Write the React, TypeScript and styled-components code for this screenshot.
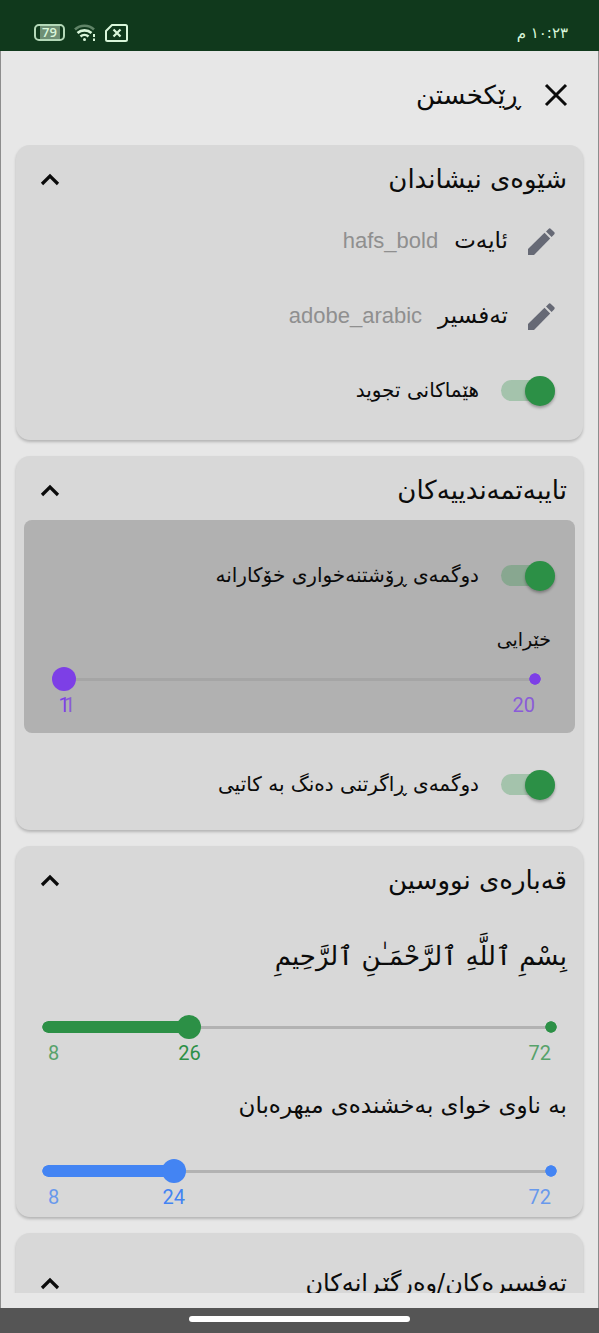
import React, { useState } from "react";
import styled, { createGlobalStyle } from "styled-components";

const GlobalStyle = createGlobalStyle`
  *, *::before, *::after { box-sizing: border-box; }
  body {
    margin: 0;
    background: #e7e7e7;
    color: #0b0b0b;
    font-family: "DejaVu Sans", sans-serif;
  }
  button { font: inherit; color: inherit; background: none; border: 0; padding: 0; cursor: pointer; }
  h1, h2, p { margin: 0; font-weight: 400; }
`;

const Screen = styled.div`
  display: flex;
  flex-direction: column;
  height: 100vh;
`;

const StatusBar = styled.header`
  flex: none;
  display: flex;
  justify-content: space-between;
  align-items: center;
  height: 51px;
  padding: 14px 31px 0 34px;
  background: #10391c;
  color: #d9f6da;
`;

const StatusIcons = styled.div`
  display: flex;
  align-items: center;
  gap: 9px;
  direction: ltr;
`;

const Clock = styled.time`
  font-size: 15px;
  line-height: 24px;
`;

const Battery = styled.span`
  display: flex;
  align-items: center;
  justify-content: center;
  width: 31px;
  height: 17px;
  border: 2px solid #b4d8b8;
  border-radius: 5px;
  background: linear-gradient(90deg, #10391c 4px, #6f8f75 4px, #6f8f75 24px, #10391c 24px);
  font: 600 13px/13px "Open Sans", sans-serif;
`;

const Page = styled.main`
  flex: 1;
  min-height: 0;
  display: flex;
  flex-direction: column;
  padding-bottom: 15px;
  border: solid #8d8d8d;
  border-width: 0 1px;
`;

const TitleBar = styled.div`
  flex: none;
  display: flex;
  align-items: center;
  gap: 23px;
  height: 94px;
  padding: 0 30px 6px;
`;

const Title = styled.h1`
  font-size: 26px;
  line-height: 40px;
`;

const IconButton = styled.button`
  display: flex;
`;

const Scroller = styled.div`
  flex: 1;
  min-height: 0;
  overflow-y: auto;
  scrollbar-width: none;
  display: flex;
  flex-direction: column;
  gap: 16px;
  padding: 0 15px;
`;

const Card = styled.section<{ $bottom: number }>`
  flex: none;
  padding-bottom: ${(p) => p.$bottom}px;
  border-radius: 14px;
  background: #d8d8d8;
  box-shadow: 0 2px 3px rgba(0, 0, 0, 0.22);
`;

const CardHeader = styled.button<{ $tall?: boolean }>`
  display: flex;
  align-items: center;
  justify-content: space-between;
  width: 100%;
  height: ${(p) => (p.$tall ? 74 : 58)}px;
  padding: ${(p) => (p.$tall ? 26 : 10)}px 16px 0 24px;
  font-size: ${(p) => (p.$tall ? 24 : 26)}px;
  line-height: 40px;
`;

const Rows = styled.div`
  display: flex;
  flex-direction: column;
  gap: 17px;
  padding-top: 9px;
`;

const Row = styled.div`
  display: flex;
  align-items: center;
  gap: 16px;
  min-height: 58px;
  padding: 0 28px;
`;

const SwitchRow = styled.label<{ $inset?: boolean }>`
  display: flex;
  align-items: center;
  gap: 22px;
  min-height: 58px;
  padding: 0 ${(p) => (p.$inset ? 20 : 28)}px;
  font-size: 20px;
  line-height: 32px;
`;

const SwitchText = styled.span`
  padding-bottom: 2px;
`;

const RowName = styled.span`
  padding: 0 4px 2px 0;
  font-size: 23px;
  line-height: 32px;
`;

const FontName = styled.span`
  direction: ltr;
  padding-bottom: 1px;
  color: #8f8f8f;
  font: 22px/32px "Liberation Sans", sans-serif;
`;

const Switch = styled.input`
  appearance: none;
  flex: none;
  position: relative;
  width: 54px;
  height: 30px;
  margin: 0;

  &::before {
    content: "";
    position: absolute;
    inset: 4px 0 5px;
    border-radius: 11px;
    background: rgba(90, 90, 90, 0.32);
  }
  &::after {
    content: "";
    position: absolute;
    top: 0;
    left: 0;
    width: 30px;
    height: 30px;
    border-radius: 50%;
    background: #f1f1f1;
    box-shadow: 0 2px 3px rgba(0, 0, 0, 0.3);
  }
  &:checked::before { background: rgba(44, 145, 70, 0.3); }
  &:checked::after { left: auto; right: 0; background: #2c9046; }
`;

const Panel = styled.div`
  margin: 6px 8px 23px;
  padding: 27px 0 16px;
  border-radius: 8px;
  background: #b1b1b1;
`;

const SliderName = styled.p`
  margin-top: 18px;
  padding: 0 24px 11px;
  font-size: 19px;
  line-height: 32px;
`;

const Basmala = styled.p`
  height: 110px;
  padding: 22px 16px 0;
  font-size: 26px;
  line-height: 60px;
  white-space: nowrap;
`;

const Sample = styled.p`
  height: 93px;
  padding: 20px 16px 0;
  font-size: 23px;
  line-height: 40px;
  white-space: nowrap;
`;

const SliderBox = styled.div<{ $side: number; $color: string }>`
  margin: 0 ${(p) => p.$side}px;
  direction: ltr;
  color: ${(p) => p.$color};
`;

const Range = styled.input<{ $line: string; $cap: boolean }>`
  appearance: none;
  display: block;
  width: 100%;
  height: 26px;
  margin: 0;
  background:
    radial-gradient(closest-side, currentColor 90%, transparent) right 6px center / 12px 12px no-repeat,
    radial-gradient(closest-side, currentColor 90%, transparent) left 6px center / 12px 12px no-repeat,
    linear-gradient(currentColor, currentColor) 12px 50% / calc((100% - 24px) * var(--at)) 12px no-repeat,
    linear-gradient(${(p) => p.$line}, ${(p) => p.$line}) center / calc(100% - 24px) 3px no-repeat;
  color: inherit;

  &::-webkit-slider-thumb {
    appearance: none;
    width: 24px;
    height: 24px;
    border-radius: 50%;
    background: currentColor;
  }
`;

const Scale = styled.div`
  position: relative;
  display: flex;
  justify-content: space-between;
  margin: 1px 12px 0;
  font: 20px/24px Roboto, sans-serif;
`;

const Bound = styled.span`
  opacity: 0.75;
`;

const Current = styled.output`
  position: absolute;
  top: 0;
  transform: translateX(-50%);
`;

const NavBar = styled.footer`
  flex: none;
  display: flex;
  justify-content: center;
  align-items: flex-start;
  height: 25px;
  padding-top: 8px;
  background: #555;
`;

const HomePill = styled.span`
  width: 37%;
  height: 6px;
  border-radius: 3px;
  background: #fff;
`;

function Chevron() {
  return (
    <svg width="20" height="14" viewBox="0 0 20 14" fill="none" stroke="#0b0b0b" strokeWidth="3.2">
      <path d="M2 12l8-8 8 8" />
    </svg>
  );
}

function Pencil() {
  return (
    <svg width="27" height="27" viewBox="0 0 27 27" fill="#666975">
      <path d="M0 21L16.500 4.800l5.700 5.700L6 27H0z" />
      <path d="M18 3.400l2.500-2.500q1.200-1.200 2.400 0l3.200 3.200q1.200 1.200 0 2.400L23.600 9z" />
    </svg>
  );
}

function Wifi() {
  return (
    <svg width="22" height="18" viewBox="0 0 22 18" fill="none" stroke="#d9f6da" strokeWidth="2.6">
      <path d="M1 5.500a14 14 0 0 1 19 0" opacity=".4" />
      <path d="M3.500 9a10.500 10.500 0 0 1 14 0M6.500 12.500a6 6 0 0 1 8 0" />
      <circle cx="10.500" cy="15.500" r="1.500" fill="#d9f6da" stroke="none" />
      <path d="M20 10v3M20 14.500v2.500" strokeWidth="2" />
    </svg>
  );
}

function NoSim() {
  return (
    <svg width="23" height="18" viewBox="0 0 23 18" fill="none" stroke="#d9f6da" strokeWidth="2">
      <path d="M7 1h13.500a1.500 1.500 0 0 1 1.500 1.500v13a1.500 1.500 0 0 1-1.500 1.500h-18a1.500 1.500 0 0 1-1.500-1.500V7z" strokeLinejoin="round" />
      <path d="M8.500 5.500l7 7M15.500 5.500l-7 7" strokeWidth="2.200" />
    </svg>
  );
}

type SliderProps = { name: string; min: number; max: number; start: number; color: string; side: number; line?: string };

function Slider({ name, min, max, start, color, side, line = "#b2b2b2" }: SliderProps) {
  const [value, setValue] = useState(start);
  const at = (value - min) / (max - min);
  return (
    <SliderBox $side={side} $color={color}>
      <Range
        type="range"
        aria-label={name}
        min={min}
        max={max}
        value={value}
        $line={line}
        $cap={at > 0}
        onChange={(e) => setValue(Number(e.target.value))}
        style={{ "--at": at } as React.CSSProperties}
      />
      <Scale>
        <Bound>{min}</Bound>
        <Current style={{ left: `${at * 100}%` }}>{value}</Current>
        <Bound>{max}</Bound>
      </Scale>
    </SliderBox>
  );
}

function Toggle({ text, inset }: { text: string; inset?: boolean }) {
  return (
    <SwitchRow $inset={inset}>
      <Switch type="checkbox" role="switch" defaultChecked />
      <SwitchText>{text}</SwitchText>
    </SwitchRow>
  );
}

function Header({ text, tall }: { text: string; tall?: boolean }) {
  return (
    <h2>
      <CardHeader type="button" aria-expanded $tall={tall}>
        <span>{text}</span>
        <Chevron />
      </CardHeader>
    </h2>
  );
}

function FontRow({ name, font }: { name: string; font: string }) {
  return (
    <Row>
      <IconButton type="button" aria-label={name}>
        <Pencil />
      </IconButton>
      <RowName>{name}</RowName>
      <FontName>{font}</FontName>
    </Row>
  );
}

export default function App() {
  return (
    <Screen dir="rtl" lang="ckb">
      <GlobalStyle />
      <StatusBar>
        <Clock>١٠:٢٣ م</Clock>
        <StatusIcons>
          <Battery>79</Battery>
          <Wifi />
          <NoSim />
        </StatusIcons>
      </StatusBar>
      <Page>
        <TitleBar>
          <IconButton type="button" aria-label="داخستن">
            <svg width="24" height="24" viewBox="0 0 24 24" stroke="#0b0b0b" strokeWidth="3">
              <path d="M2 2l20 20M22 2L2 22" />
            </svg>
          </IconButton>
          <Title>ڕێکخستن</Title>
        </TitleBar>
        <Scroller>
          <Card $bottom={20}>
            <Header text="شێوەی نیشاندان" />
            <Rows>
              <FontRow name="ئایەت" font="hafs_bold" />
              <FontRow name="تەفسیر" font="adobe_arabic" />
              <Toggle text="هێماکانی تجوید" />
            </Rows>
          </Card>
          <Card $bottom={16}>
            <Header text="تایبەتمەندییەکان" />
            <Panel>
              <Toggle text="دوگمەی ڕۆشتنەخواری خۆکارانە" inset />
              <SliderName>خێرایی</SliderName>
              <Slider name="خێرایی" min={1} max={20} start={1} color="#7d3fe6" side={28} line="#a5a5a5" />
            </Panel>
            <Toggle text="دوگمەی ڕاگرتنی دەنگ بە کاتیی" />
          </Card>
          <Card $bottom={8}>
            <Header text="قەبارەی نووسین" />
            <Basmala lang="ar">بِسْمِ ٱللَّهِ ٱلرَّحْمَـٰنِ ٱلرَّحِيمِ</Basmala>
            <Slider name="قەبارەی ئایەت" min={8} max={72} start={26} color="#2c9046" side={20} />
            <Sample>بە ناوی خوای بەخشندەی میهرەبان</Sample>
            <Slider name="قەبارەی تەفسیر" min={8} max={72} start={24} color="#4384f3" side={20} />
          </Card>
          <Card $bottom={20}>
            <Header text="تەفسیرەکان/وەرگێڕانەکان" tall />
          </Card>
        </Scroller>
      </Page>
      <NavBar>
        <HomePill />
      </NavBar>
    </Screen>
  );
}
